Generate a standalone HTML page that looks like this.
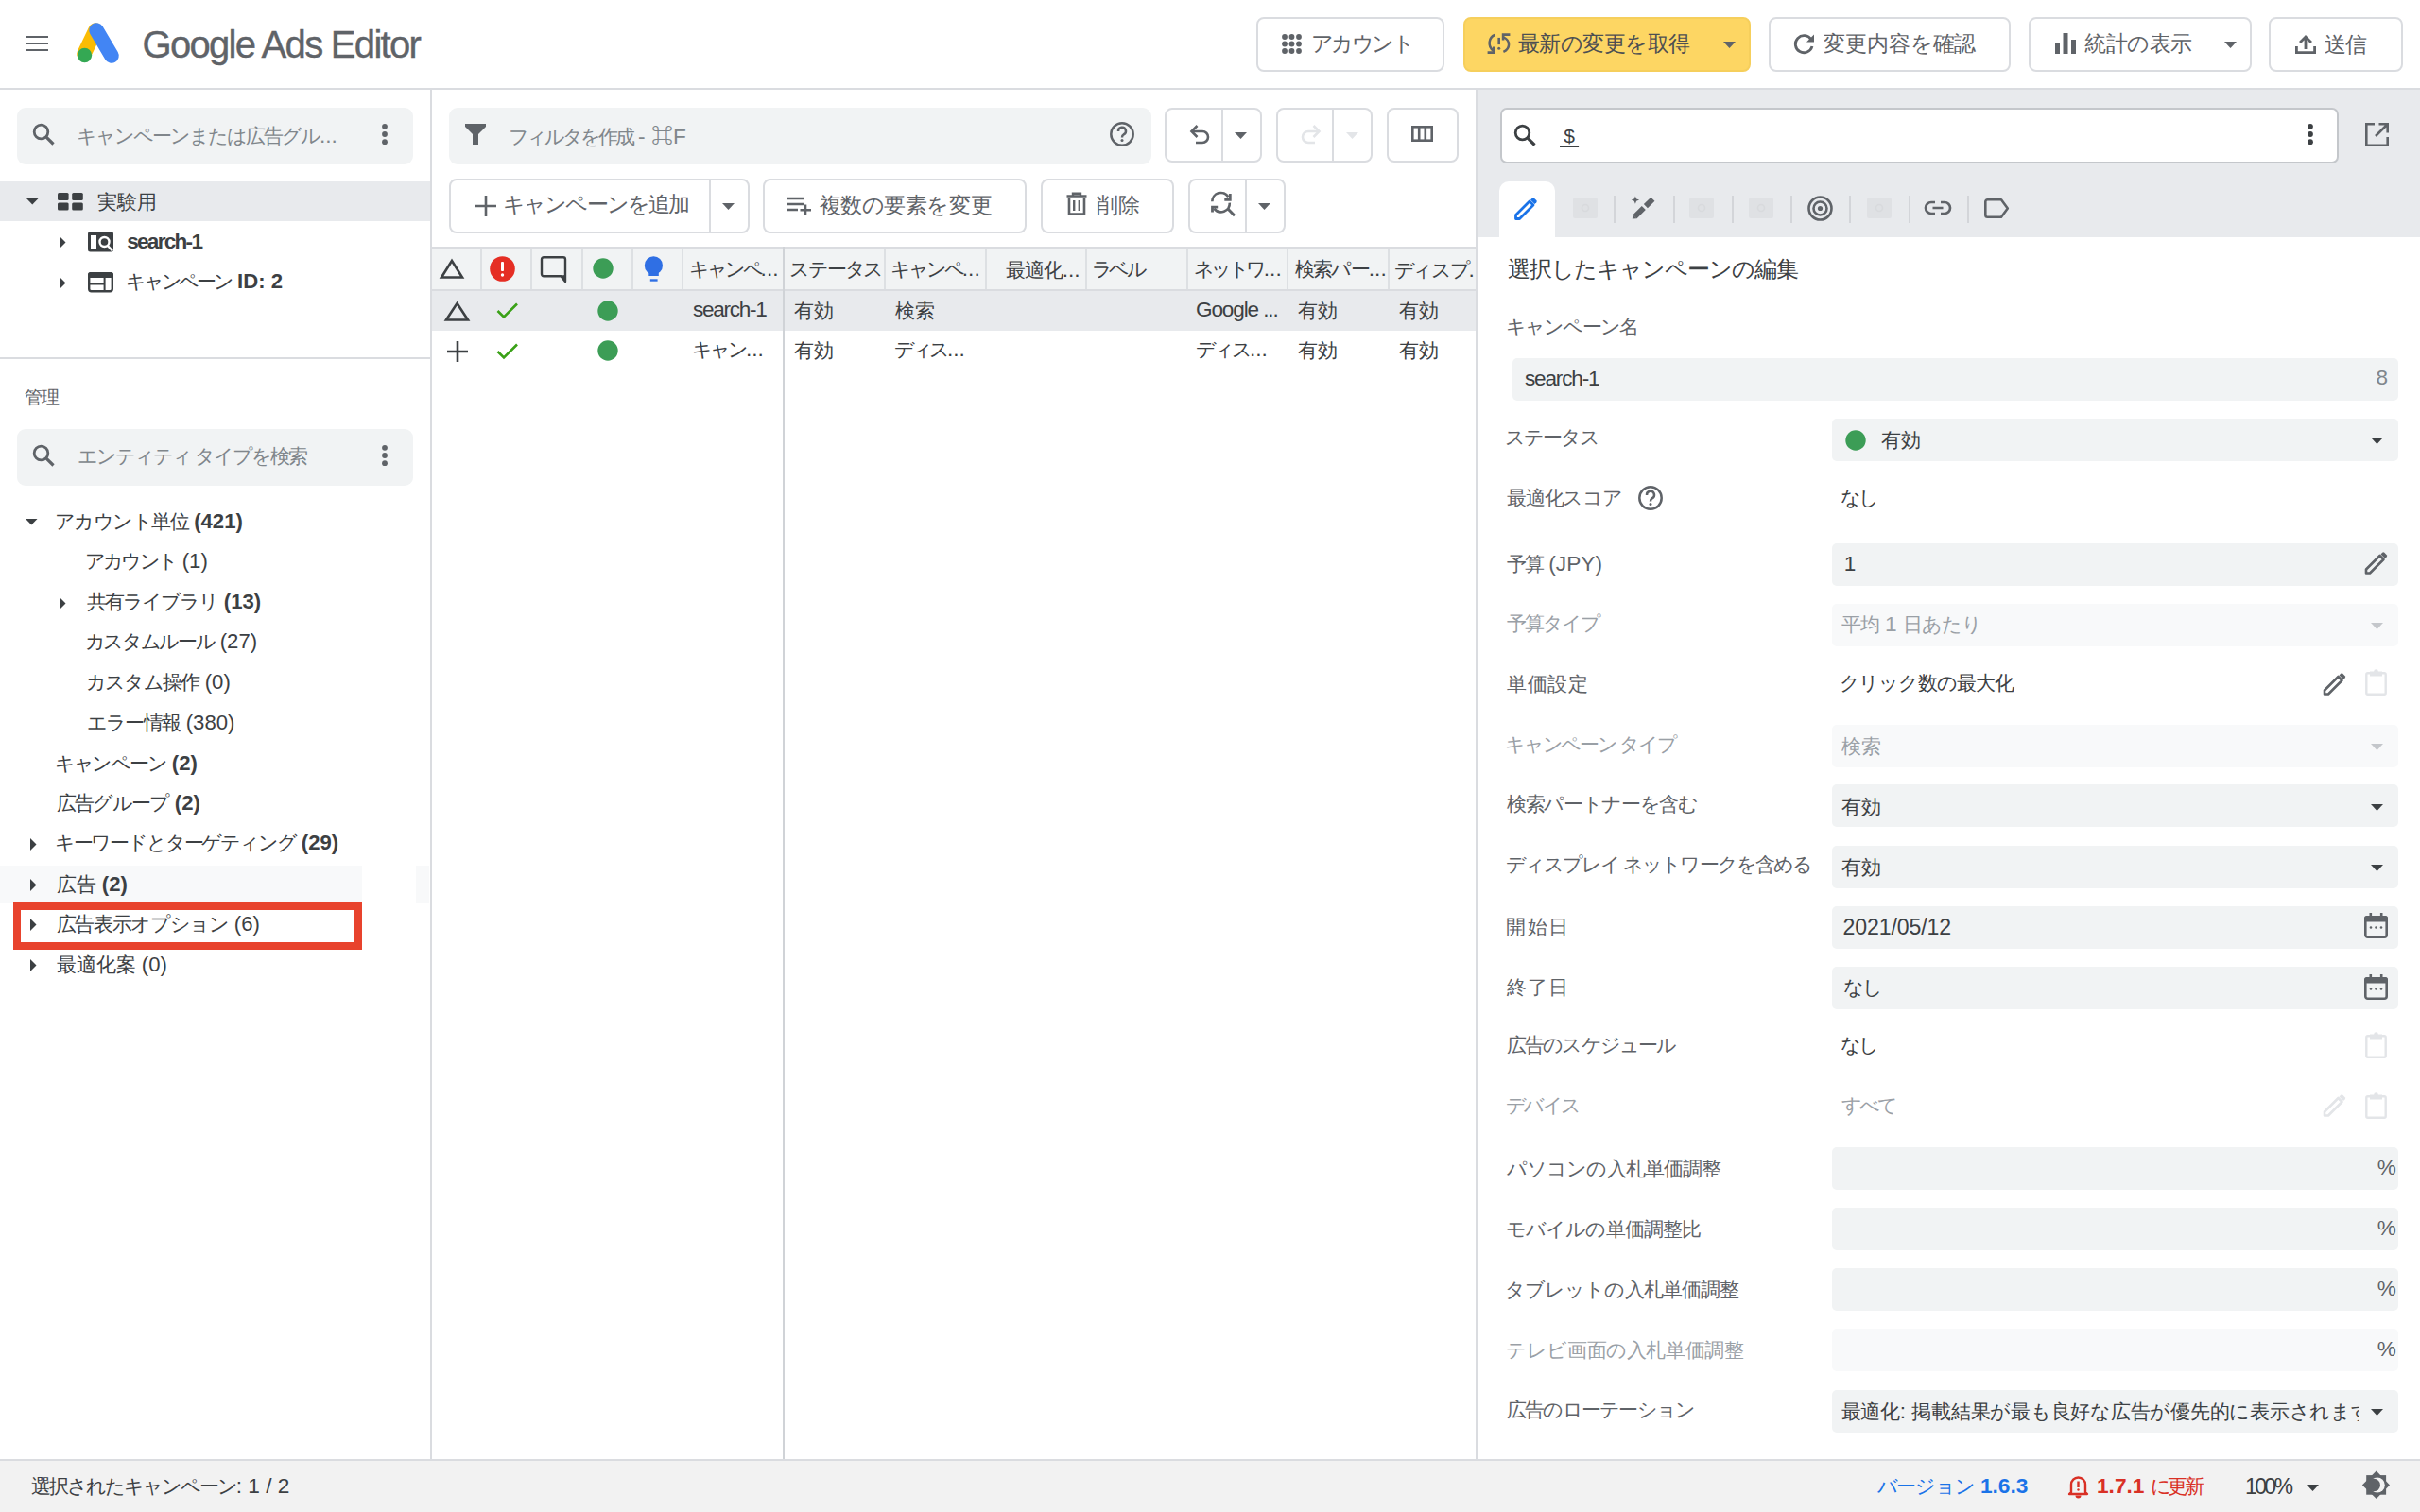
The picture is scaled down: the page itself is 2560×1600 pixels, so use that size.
<!DOCTYPE html>
<html lang="ja"><head><meta charset="utf-8"><title>Google Ads Editor</title>
<style>
*{box-sizing:border-box;margin:0;padding:0}
html,body{width:2560px;height:1600px;overflow:hidden;background:#fff}
body{font-family:"Liberation Sans",sans-serif;color:#3c4043;position:relative}
.a{position:absolute}
.t{position:absolute;white-space:nowrap;line-height:1}
.btn{position:absolute;border:2px solid #dadce0;border-radius:7px;background:#fff}
.vdiv{position:absolute;width:2px;background:#dadce0}
.box{position:absolute;background:#f1f3f4;border-radius:9px}
svg{position:absolute;overflow:visible}
</style></head>
<body>
<div class="a" style="left:0;top:93px;width:2560px;height:2px;background:#dadce0"></div>
<div class="a" style="left:27px;top:38px;width:24px;height:2.4px;background:#5f6368"></div>
<div class="a" style="left:27px;top:45px;width:24px;height:2.4px;background:#5f6368"></div>
<div class="a" style="left:27px;top:52px;width:24px;height:2.4px;background:#5f6368"></div>
<svg style="left:80px;top:22px" width="50" height="46" viewBox="0 0 50 46">
<line x1="21" y1="10" x2="9" y2="35" stroke="#fbbc04" stroke-width="15.5" stroke-linecap="round"/>
<line x1="22" y1="10" x2="38" y2="37" stroke="#4285f4" stroke-width="15.5" stroke-linecap="round"/>
<circle cx="9.5" cy="36.5" r="7.7" fill="#34a853"/>
</svg>
<div class="t" id="t0e98bc9859" style="left:150.50px;top:27.0px;font-size:40px;height:40px;line-height:40px;letter-spacing:-1.687px;color:#5f6368;-webkit-text-stroke:0.4px #5f6368">Google Ads Editor</div>
<div class="a" style="left:1329px;top:18px;width:199px;height:58px;border:2px solid #dadce0;border-radius:8px;background:#fff"></div>
<svg style="left:1356px;top:36px" width="22" height="22"><circle cx="3.0" cy="3.0" r="2.9" fill="#5f6368"/><circle cx="3.0" cy="10.5" r="2.9" fill="#5f6368"/><circle cx="3.0" cy="18.0" r="2.9" fill="#5f6368"/><circle cx="10.5" cy="3.0" r="2.9" fill="#5f6368"/><circle cx="10.5" cy="10.5" r="2.9" fill="#5f6368"/><circle cx="10.5" cy="18.0" r="2.9" fill="#5f6368"/><circle cx="18.0" cy="3.0" r="2.9" fill="#5f6368"/><circle cx="18.0" cy="10.5" r="2.9" fill="#5f6368"/><circle cx="18.0" cy="18.0" r="2.9" fill="#5f6368"/></svg>
<div class="t" id="tbd3e4d66c5" style="left:1386.60px;top:34.5px;font-size:23px;height:23px;line-height:23px;letter-spacing:-2.500px;color:#5f6368">アカウント</div>
<div class="a" style="left:1548px;top:18px;width:304px;height:58px;border:2px solid #f6cf5c;border-radius:8px;background:#fdd663"></div>
<svg style="left:1572px;top:35px" width="28" height="24" viewBox="0 0 28 24">
<path d="M9.2 2 C3 4.5 1.2 13.5 7.8 18.8" fill="none" stroke="#5f6368" stroke-width="2.5"/>
<path d="M1.6 20.6 H8.3 V14.4" fill="none" stroke="#5f6368" stroke-width="2.6"/>
<rect x="12.4" y="4.9" width="2.6" height="7.2" fill="#5f6368"/><circle cx="13.7" cy="16.2" r="1.5" fill="#5f6368"/>
<path d="M18.8 4.5 C25.8 8 26 16.5 18.4 19.8" fill="none" stroke="#5f6368" stroke-width="2.5"/>
<path d="M18.1 7.6 V1.6 H25.4" fill="none" stroke="#5f6368" stroke-width="2.6"/>
</svg>
<div class="t" id="t5f19e19717" style="left:1606.00px;top:35.2px;font-size:23px;height:23px;line-height:23px;letter-spacing:-0.571px;color:#4d4f52">最新の変更を取得</div>
<svg style="left:1822.5px;top:43.5px" width="13" height="7"><path d="M0 0H13L6.5 7Z" fill="#5f6368"/></svg>
<div class="a" style="left:1871px;top:18px;width:256px;height:58px;border:2px solid #dadce0;border-radius:8px;background:#fff"></div>
<svg style="left:1897px;top:35px" width="24" height="23" viewBox="0 0 24 23">
<path d="M19 7 A9 9 0 1 0 20 14" fill="none" stroke="#5f6368" stroke-width="2.8"/>
<path d="M14 9.5 L22 9.5 L22 1.5Z" fill="#5f6368"/>
</svg>
<div class="t" id="tc52f889c36" style="left:1929.40px;top:35.4px;font-size:23px;height:23px;line-height:23px;letter-spacing:-0.167px;color:#5f6368">変更内容を確認</div>
<div class="a" style="left:2146px;top:18px;width:236px;height:58px;border:2px solid #dadce0;border-radius:8px;background:#fff"></div>
<svg style="left:2174px;top:35px" width="22" height="22"><rect x="0" y="10" width="5" height="12" fill="#5f6368"/><rect x="8.5" y="0" width="5" height="22" fill="#5f6368"/><rect x="17" y="7" width="5" height="15" fill="#5f6368"/></svg>
<div class="t" id="tb15a55fc0b" style="left:2205.00px;top:35.3px;font-size:23px;height:23px;line-height:23px;letter-spacing:-0.500px;color:#5f6368">統計の表示</div>
<svg style="left:2352.5px;top:43.5px" width="13" height="7"><path d="M0 0H13L6.5 7Z" fill="#5f6368"/></svg>
<div class="a" style="left:2400px;top:18px;width:142px;height:58px;border:2px solid #dadce0;border-radius:8px;background:#fff"></div>
<svg style="left:2428px;top:36px" width="22" height="21" viewBox="0 0 22 21">
<path d="M11 16 V3 M5 9 L11 3 L17 9" fill="none" stroke="#5f6368" stroke-width="2.8"/>
<path d="M1.4 13 V19.6 H20.6 V13" fill="none" stroke="#5f6368" stroke-width="2.8"/>
</svg>
<div class="t" id="t28615207a4" style="left:2459.40px;top:35.5px;font-size:23px;height:23px;line-height:23px;letter-spacing:-1.000px;color:#5f6368">送信</div>
<div class="a" style="left:18px;top:114px;width:419px;height:60px;background:#f1f3f4;border-radius:9px"></div>
<svg style="left:34px;top:130px" width="24.0" height="24.0" viewBox="0 0 24 24">
<circle cx="9.5" cy="9.5" r="7.3" fill="none" stroke="#5f6368" stroke-width="2.8"/>
<path d="M14.8 14.8 L22.5 22.5" stroke="#5f6368" stroke-width="3.1999999999999997"/>
</svg>
<div class="t" id="t1f94e6896a" style="left:81.00px;top:132.7px;font-size:21px;height:21px;line-height:21px;letter-spacing:-2.000px;color:#80868b">キャンペーンまたは広告グル<span style="letter-spacing:0;font-size:1.08em">...</span></div>
<svg style="left:403px;top:130px" width="8" height="24"><circle cx="4" cy="3.8000000000000007" r="2.9" fill="#5f6368"/><circle cx="4" cy="12.0" r="2.9" fill="#5f6368"/><circle cx="4" cy="20.2" r="2.9" fill="#5f6368"/></svg>
<div class="a" style="left:0px;top:192px;width:455px;height:42px;background:#e8eaed"></div>
<svg style="left:27.75px;top:210.25px" width="12.5" height="6.5"><path d="M0 0H12.5L6.25 6.5Z" fill="#3c4043"/></svg>
<svg style="left:61px;top:204px" width="27" height="19"><rect x="0" y="0" width="11.6" height="8" rx="1.5" fill="#3c4043"/><rect x="0" y="10.4" width="11.6" height="8" rx="1.5" fill="#3c4043"/><rect x="15.2" y="0" width="11.6" height="8" rx="1.5" fill="#3c4043"/><rect x="15.2" y="10.4" width="11.6" height="8" rx="1.5" fill="#3c4043"/></svg>
<div class="t" id="t51777ecbb5" style="left:103.00px;top:202.5px;font-size:21px;height:21px;line-height:21px;color:#3c4043">実験用</div>
<svg style="left:62.95px;top:249.5px" width="6.5" height="13"><path d="M0 0V13L6.5 6.5Z" fill="#3c4043"/></svg>
<svg style="left:93px;top:245px" width="27" height="22" viewBox="0 0 27 22">
<rect x="0" y="0" width="27" height="21.5" rx="2.5" fill="#3c4043"/>
<rect x="3" y="4" width="6" height="14.5" fill="#fff"/>
<circle cx="17.5" cy="11" r="5" fill="none" stroke="#fff" stroke-width="2.4"/>
<circle cx="17.5" cy="11" r="2.6" fill="#3c4043"/>
<path d="M20.5 14.5 L26 20.5" stroke="#fff" stroke-width="2.4"/>
</svg>
<div class="t" id="td634d451cc" style="left:134.20px;top:244.7px;font-size:22.55px;height:22.55px;line-height:22.55px;letter-spacing:-1.714px;color:#3c4043;font-weight:bold">search-1</div>
<svg style="left:62.95px;top:292.5px" width="6.5" height="13"><path d="M0 0V13L6.5 6.5Z" fill="#3c4043"/></svg>
<svg style="left:93px;top:288px" width="27" height="22" viewBox="0 0 27 22">
<rect x="1.2" y="1.2" width="24.6" height="19" rx="2.5" fill="none" stroke="#3c4043" stroke-width="2.4"/>
<rect x="0" y="0" width="27" height="6" rx="2.5" fill="#3c4043"/>
<path d="M2 12.6 H17 M17.6 6 V20" stroke="#3c4043" stroke-width="2"/>
</svg>
<div class="t" id="t5456d05e07" style="left:132.90px;top:287.8px;font-size:20.5px;height:20.5px;line-height:20.5px;letter-spacing:-3.167px;color:#3c4043">キャンペーン<span style="letter-spacing:0;font-size:1.08em"> </span><b><span style="letter-spacing:0;font-size:1.08em">ID: 2</span></b></div>
<div class="a" style="left:0px;top:378px;width:455px;height:2px;background:#dadce0"></div>
<div class="t" id="tce64fb257d" style="left:25.70px;top:410.5px;font-size:19px;height:19px;line-height:19px;letter-spacing:-1.000px;color:#5f6368">管理</div>
<div class="a" style="left:18px;top:454px;width:419px;height:60px;background:#f1f3f4;border-radius:9px"></div>
<svg style="left:34px;top:470px" width="24.0" height="24.0" viewBox="0 0 24 24">
<circle cx="9.5" cy="9.5" r="7.3" fill="none" stroke="#5f6368" stroke-width="2.8"/>
<path d="M14.8 14.8 L22.5 22.5" stroke="#5f6368" stroke-width="3.1999999999999997"/>
</svg>
<div class="t" id="t41e2b36975" style="left:82.00px;top:471.7px;font-size:21px;height:21px;line-height:21px;letter-spacing:-2.000px;color:#80868b">エンティティ タイプを検索</div>
<svg style="left:403px;top:470px" width="8" height="24"><circle cx="4" cy="3.8000000000000007" r="2.9" fill="#5f6368"/><circle cx="4" cy="12.0" r="2.9" fill="#5f6368"/><circle cx="4" cy="20.2" r="2.9" fill="#5f6368"/></svg>
<div class="a" style="left:0px;top:916px;width:383px;height:40px;background:#f8f9fa"></div>
<div class="a" style="left:440px;top:916px;width:14px;height:40px;background:#f8f9fa"></div>
<svg style="left:27.25px;top:549.45px" width="12.5" height="6.5"><path d="M0 0H12.5L6.25 6.5Z" fill="#3c4043"/></svg>
<div class="t" id="t031c90fa45" style="left:58.00px;top:541.7px;font-size:20.5px;height:20.5px;line-height:20.5px;letter-spacing:-1.571px;color:#3c4043">アカウント単位<span style="letter-spacing:0;font-size:1.08em"> </span><b><span style="letter-spacing:0;font-size:1.08em">(421)</span></b></div>
<div class="t" id="t4351a4cfc5" style="left:89.60px;top:584.0px;font-size:20.5px;height:20.5px;line-height:20.5px;letter-spacing:-2.600px;color:#3c4043">アカウント<span style="letter-spacing:0;font-size:1.08em"> (1)</span></div>
<svg style="left:63.25px;top:631.5px" width="6.5" height="13"><path d="M0 0V13L6.5 6.5Z" fill="#3c4043"/></svg>
<div class="t" id="t6fb28b62c7" style="left:91.60px;top:627.0px;font-size:20.5px;height:20.5px;line-height:20.5px;letter-spacing:-1.857px;color:#3c4043">共有ライブラリ<span style="letter-spacing:0;font-size:1.08em"> </span><b><span style="letter-spacing:0;font-size:1.08em">(13)</span></b></div>
<div class="t" id="t906edec8b3" style="left:89.60px;top:669.2px;font-size:20.5px;height:20.5px;line-height:20.5px;letter-spacing:-2.286px;color:#3c4043">カスタムルール<span style="letter-spacing:0;font-size:1.08em"> (27)</span></div>
<div class="t" id="te8d5837495" style="left:90.60px;top:711.7px;font-size:20.5px;height:20.5px;line-height:20.5px;letter-spacing:-1.667px;color:#3c4043">カスタム操作<span style="letter-spacing:0;font-size:1.08em"> (0)</span></div>
<div class="t" id="t5d91410f7c" style="left:91.60px;top:754.6px;font-size:20.5px;height:20.5px;line-height:20.5px;letter-spacing:-1.600px;color:#3c4043">エラー情報<span style="letter-spacing:0;font-size:1.08em"> (380)</span></div>
<div class="t" id="tdfaea9c2f2" style="left:57.70px;top:797.8px;font-size:20.5px;height:20.5px;line-height:20.5px;letter-spacing:-2.167px;color:#3c4043">キャンペーン<span style="letter-spacing:0;font-size:1.08em"> </span><b><span style="letter-spacing:0;font-size:1.08em">(2)</span></b></div>
<div class="t" id="t6c25c6415c" style="left:59.70px;top:839.6px;font-size:20.5px;height:20.5px;line-height:20.5px;letter-spacing:-1.667px;color:#3c4043">広告グループ<span style="letter-spacing:0;font-size:1.08em"> </span><b><span style="letter-spacing:0;font-size:1.08em">(2)</span></b></div>
<svg style="left:31.75px;top:887.0px" width="6.5" height="13"><path d="M0 0V13L6.5 6.5Z" fill="#3c4043"/></svg>
<div class="t" id="te58e9979fa" style="left:57.70px;top:882.2px;font-size:20.5px;height:20.5px;line-height:20.5px;letter-spacing:-2.154px;color:#3c4043">キーワードとターゲティング<span style="letter-spacing:0;font-size:1.08em"> </span><b><span style="letter-spacing:0;font-size:1.08em">(29)</span></b></div>
<svg style="left:31.75px;top:929.5px" width="6.5" height="13"><path d="M0 0V13L6.5 6.5Z" fill="#3c4043"/></svg>
<div class="t" id="t1c98eda746" style="left:59.70px;top:925.8px;font-size:20.5px;height:20.5px;line-height:20.5px;letter-spacing:0.000px;color:#3c4043">広告<span style="letter-spacing:0;font-size:1.08em"> </span><b><span style="letter-spacing:0;font-size:1.08em">(2)</span></b></div>
<svg style="left:31.75px;top:972.0px" width="6.5" height="13"><path d="M0 0V13L6.5 6.5Z" fill="#3c4043"/></svg>
<div class="t" id="t74a955de19" style="left:59.70px;top:967.7px;font-size:20.5px;height:20.5px;line-height:20.5px;letter-spacing:-1.333px;color:#3c4043">広告表示オプション<span style="letter-spacing:0;font-size:1.08em"> (6)</span></div>
<svg style="left:31.75px;top:1014.5px" width="6.5" height="13"><path d="M0 0V13L6.5 6.5Z" fill="#3c4043"/></svg>
<div class="t" id="tb235673638" style="left:59.70px;top:1010.8px;font-size:20.5px;height:20.5px;line-height:20.5px;letter-spacing:-0.000px;color:#3c4043">最適化案<span style="letter-spacing:0;font-size:1.08em"> (0)</span></div>
<div class="a" style="left:14px;top:955px;width:369px;height:50px;border:8px solid #e8432d"></div>
<div class="a" style="left:455px;top:95px;width:2px;height:1450px;background:#dadce0"></div>
<div class="a" style="left:475px;top:114px;width:743px;height:60px;background:#f1f3f4;border-radius:9px"></div>
<svg style="left:492px;top:131px" width="22" height="22" viewBox="0 0 22 22"><path d="M0 0 H22 V3 L14 11 V22 H8 V11 L0 3Z" fill="#5f6368"/></svg>
<div class="t" id="t86e97a2b0c" style="left:537.80px;top:133.8px;font-size:21px;height:21px;line-height:21px;letter-spacing:-3.000px;color:#80868b">フィルタを作成<span style="letter-spacing:0;font-size:1.08em"> - ⌘F</span></div>
<svg style="left:1174px;top:129px" width="26" height="26" viewBox="0 0 26 26">
<circle cx="13" cy="13" r="11.7" fill="none" stroke="#5f6368" stroke-width="2.5"/>
<path d="M9 10 A4 4 0 1 1 14.5 13.5 C13 14.3 13 15 13 16.5" fill="none" stroke="#5f6368" stroke-width="2.5"/>
<circle cx="13" cy="19.5" r="1.5" fill="#5f6368"/>
</svg>
<div class="a" style="left:1232px;top:114px;width:103px;height:58px;border:2px solid #dadce0;border-radius:8px;background:#fff"></div>
<div class="a" style="left:1292px;top:115px;width:2px;height:56px;background:#dadce0"></div>
<svg style="left:1258px;top:131px" width="23" height="21" viewBox="0 0 23 21">
<path d="M3 8 H14 A6 6 0 0 1 14 20 H7" fill="none" stroke="#5f6368" stroke-width="2.6"/>
<path d="M8.5 2 L2.5 8 L8.5 14" fill="none" stroke="#5f6368" stroke-width="2.6"/>
</svg>
<svg style="left:1305.5px;top:139.5px" width="13" height="7"><path d="M0 0H13L6.5 7Z" fill="#5f6368"/></svg>
<div class="a" style="left:1350px;top:114px;width:102px;height:58px;border:2px solid #dadce0;border-radius:8px;background:#fff"></div>
<div class="a" style="left:1409px;top:115px;width:2px;height:56px;background:#dadce0"></div>
<svg style="left:1375px;top:131px" width="23" height="21" viewBox="0 0 23 21">
<path d="M20 8 H9 A6 6 0 0 0 9 20 H16" fill="none" stroke="#e3e5e8" stroke-width="2.6"/>
<path d="M14.5 2 L20.5 8 L14.5 14" fill="none" stroke="#e3e5e8" stroke-width="2.6"/>
</svg>
<svg style="left:1423.5px;top:139.5px" width="13" height="7"><path d="M0 0H13L6.5 7Z" fill="#e3e5e8"/></svg>
<div class="a" style="left:1467px;top:114px;width:76px;height:58px;border:2px solid #dadce0;border-radius:8px;background:#fff"></div>
<svg style="left:1493px;top:133px" width="23" height="17"><rect x="1.3" y="1.3" width="20.4" height="14.4" fill="none" stroke="#5f6368" stroke-width="2.6"/><path d="M8.2 1 V16 M14.8 1 V16" stroke="#5f6368" stroke-width="2.6"/></svg>
<div class="a" style="left:475px;top:189px;width:318px;height:58px;border:2px solid #dadce0;border-radius:8px;background:#fff"></div>
<div class="a" style="left:750px;top:190px;width:2px;height:56px;background:#dadce0"></div>
<svg style="left:503px;top:207px" width="22" height="22"><path d="M11 0 V22 M0 11 H22" stroke="#5f6368" stroke-width="2.6"/></svg>
<div class="t" id="t782b6a32c0" style="left:532.00px;top:206.0px;font-size:22.5px;height:22.5px;line-height:22.5px;letter-spacing:-1.875px;color:#5f6368">キャンペーンを追加</div>
<svg style="left:763.5px;top:214.5px" width="13" height="7"><path d="M0 0H13L6.5 7Z" fill="#5f6368"/></svg>
<div class="a" style="left:807px;top:189px;width:279px;height:58px;border:2px solid #dadce0;border-radius:8px;background:#fff"></div>
<svg style="left:833px;top:208px" width="27" height="20" viewBox="0 0 27 20">
<path d="M0 2 H17 M0 8 H17 M0 14 H11" stroke="#5f6368" stroke-width="2.6"/>
<path d="M19 8.5 V20 M13.5 14.2 H25" stroke="#5f6368" stroke-width="2.6"/>
</svg>
<div class="t" id="t975316687c" style="left:866.60px;top:206.5px;font-size:22.5px;height:22.5px;line-height:22.5px;letter-spacing:-0.429px;color:#5f6368">複数の要素を変更</div>
<div class="a" style="left:1101px;top:189px;width:141px;height:58px;border:2px solid #dadce0;border-radius:8px;background:#fff"></div>
<svg style="left:1128px;top:204px" width="22" height="24" viewBox="0 0 22 24">
<path d="M0.5 3.5 H21.5 M7 3.5 V0.8 H15 V3.5" fill="none" stroke="#5f6368" stroke-width="2.4"/>
<path d="M3 5 V22.5 H19 V5" fill="none" stroke="#5f6368" stroke-width="2.6"/>
<path d="M8.2 8 V19 M13.8 8 V19" stroke="#5f6368" stroke-width="2.4"/>
</svg>
<div class="t" id="t85a9fe6288" style="left:1160.00px;top:206.8px;font-size:22.5px;height:22.5px;line-height:22.5px;color:#5f6368">削除</div>
<div class="a" style="left:1257px;top:189px;width:103px;height:58px;border:2px solid #dadce0;border-radius:8px;background:#fff"></div>
<div class="a" style="left:1317px;top:190px;width:2px;height:56px;background:#dadce0"></div>
<svg style="left:1280px;top:202px" width="28" height="28" viewBox="0 0 28 28">
<path d="M2.3 11.3 A9.2 9.2 0 0 1 19.3 6.3" fill="none" stroke="#5f6368" stroke-width="2.6"/>
<path d="M15.3 9.3 H21.3 V3" fill="none" stroke="#5f6368" stroke-width="2.8"/>
<path d="M20.8 12.6 A9.2 9.2 0 0 1 4.3 18.6" fill="none" stroke="#5f6368" stroke-width="2.6"/>
<path d="M8.2 17.2 H2.5 V22.6" fill="none" stroke="#5f6368" stroke-width="2.8"/>
<path d="M18.5 18.5 L26 26.2" stroke="#5f6368" stroke-width="3"/>
</svg>
<svg style="left:1330.5px;top:214.5px" width="13" height="7"><path d="M0 0H13L6.5 7Z" fill="#5f6368"/></svg>
<div class="a" style="left:457px;top:261px;width:1105px;height:47px;background:#f1f3f4;border-top:2px solid #dadce0;border-bottom:2px solid #dadce0"></div>
<div class="a" style="left:508px;top:263px;width:2px;height:43px;background:#dde0e3"></div>
<div class="a" style="left:561px;top:263px;width:2px;height:43px;background:#dde0e3"></div>
<div class="a" style="left:615px;top:263px;width:2px;height:43px;background:#dde0e3"></div>
<div class="a" style="left:668px;top:263px;width:2px;height:43px;background:#dde0e3"></div>
<div class="a" style="left:721px;top:263px;width:2px;height:43px;background:#dde0e3"></div>
<div class="a" style="left:935px;top:263px;width:2px;height:43px;background:#dde0e3"></div>
<div class="a" style="left:1042px;top:263px;width:2px;height:43px;background:#dde0e3"></div>
<div class="a" style="left:1148px;top:263px;width:2px;height:43px;background:#dde0e3"></div>
<div class="a" style="left:1255px;top:263px;width:2px;height:43px;background:#dde0e3"></div>
<div class="a" style="left:1361px;top:263px;width:2px;height:43px;background:#dde0e3"></div>
<div class="a" style="left:1468px;top:263px;width:2px;height:43px;background:#dde0e3"></div>
<div class="a" style="left:828px;top:261px;width:2px;height:1284px;background:#d0d3d7"></div>
<svg style="left:465px;top:274px" width="26" height="21" viewBox="0 0 26 21"><path d="M13 2 L24 19.5 H2Z" fill="none" stroke="#3c4043" stroke-width="2.6" stroke-linejoin="miter"/></svg>
<svg style="left:518px;top:271px" width="27" height="27" viewBox="0 0 27 27"><circle cx="13.5" cy="13.5" r="13.3" fill="#e52e24"/><rect x="12" y="6" width="3" height="10" rx="1" fill="#fff"/><circle cx="13.5" cy="20" r="1.7" fill="#fff"/></svg>
<svg style="left:571px;top:270px" width="29" height="29" viewBox="0 0 29 29"><path d="M4.2 2.2 H24.8 A2.2 2.2 0 0 1 27 4.4 V28 L22.5 22.2 H4.2 A2.2 2.2 0 0 1 2 20 V4.4 A2.2 2.2 0 0 1 4.2 2.2Z" fill="none" stroke="#3c4043" stroke-width="2.4" stroke-linejoin="round"/><path d="M22 21.5 L27 27.5 V21Z" fill="#3c4043"/></svg>
<svg style="left:627px;top:273px" width="22" height="22"><circle cx="11" cy="11" r="10.7" fill="#3c9d56"/></svg>
<svg style="left:681px;top:270px" width="21" height="29" viewBox="0 0 21 29"><circle cx="10.4" cy="10.9" r="9.6" fill="#2f6fe4"/><rect x="5.3" y="14" width="10.5" height="8" fill="#2f6fe4"/><rect x="6.8" y="25.3" width="7.8" height="2.4" fill="#2f6fe4"/></svg>
<div class="t" id="t49a91fd990" style="left:728.60px;top:273.5px;font-size:21px;height:21px;line-height:21px;letter-spacing:-3.000px;color:#3c4043">キャンペ<span style="letter-spacing:0;font-size:1.08em">...</span></div>
<div class="t" id="tcb27e32c73" style="left:835.30px;top:273.5px;font-size:21px;height:21px;line-height:21px;letter-spacing:-2.250px;color:#3c4043">ステータス</div>
<div class="t" id="t2fb14317ef" style="left:941.80px;top:273.5px;font-size:21px;height:21px;line-height:21px;letter-spacing:-3.000px;color:#3c4043">キャンペ<span style="letter-spacing:0;font-size:1.08em">...</span></div>
<div class="t" id="t5574c52f5c" style="left:1063.70px;top:274.5px;font-size:21px;height:21px;line-height:21px;letter-spacing:-1.000px;color:#3c4043">最適化<span style="letter-spacing:0;font-size:1.08em">...</span></div>
<div class="t" id="tf387f87156" style="left:1154.60px;top:273.5px;font-size:21px;height:21px;line-height:21px;letter-spacing:-3.500px;color:#3c4043">ラベル</div>
<div class="t" id="t9575097b27" style="left:1262.80px;top:273.5px;font-size:21px;height:21px;line-height:21px;letter-spacing:-3.500px;color:#3c4043">ネットワ<span style="letter-spacing:0;font-size:1.08em">...</span></div>
<div class="t" id="t5d4e98ecd6" style="left:1369.80px;top:274.0px;font-size:21px;height:21px;line-height:21px;letter-spacing:-1.750px;color:#3c4043">検索パー<span style="letter-spacing:0;font-size:1.08em">...</span></div>
<div class="t" id="tf0c1e1586e" style="left:1474.70px;top:273.5px;font-size:21px;height:21px;line-height:21px;color:#3c4043;width:85.3px;overflow:hidden;height:26px;top:272px;line-height:26px;letter-spacing:-2.3px">ディスプ<span style="letter-spacing:0;font-size:1.08em">...</span></div>
<div class="a" style="left:457px;top:308px;width:1105px;height:42px;background:#e8eaed"></div>
<div class="a" style="left:828px;top:308px;width:2px;height:42px;background:#d0d3d7"></div>
<svg style="left:470px;top:319px" width="27" height="21" viewBox="0 0 27 21"><path d="M13.5 2 L25 19.5 H2Z" fill="none" stroke="#3c4043" stroke-width="2.6"/></svg>
<svg style="left:525px;top:320px" width="24" height="18" viewBox="0 0 24 18"><path d="M1.5 9 L8 15.5 L22 1.5" fill="none" stroke="#3aa117" stroke-width="2.6"/></svg>
<svg style="left:632px;top:318px" width="22" height="22"><circle cx="11" cy="11" r="10.7" fill="#3c9d56"/></svg>
<div class="t" id="tcdf4fcc91b" style="left:733.00px;top:317.0px;font-size:22.55px;height:22.55px;line-height:22.55px;letter-spacing:-1.286px;color:#3c4043">search-1</div>
<div class="t" id="t5e9e72ff10" style="left:840.00px;top:317.8px;font-size:21px;height:21px;line-height:21px;letter-spacing:-0.000px;color:#3c4043">有効</div>
<div class="t" id="tae988b3c7a" style="left:946.60px;top:317.8px;font-size:21px;height:21px;line-height:21px;letter-spacing:-0.000px;color:#3c4043">検索</div>
<div class="t" id="t979ff9a0c1" style="left:1265.00px;top:317.0px;font-size:22.55px;height:22.55px;line-height:22.55px;letter-spacing:-1.111px;color:#3c4043">Google ...</div>
<div class="t" id="td279f1e1f7" style="left:1373.30px;top:317.8px;font-size:21px;height:21px;line-height:21px;letter-spacing:0.000px;color:#3c4043">有効</div>
<div class="t" id="te933284f8f" style="left:1479.70px;top:317.8px;font-size:21px;height:21px;line-height:21px;letter-spacing:-0.000px;color:#3c4043">有効</div>
<svg style="left:473px;top:361px" width="22" height="22"><path d="M11 0 V22 M0 11 H22" stroke="#3c4043" stroke-width="2.6"/></svg>
<svg style="left:525px;top:363px" width="24" height="18" viewBox="0 0 24 18"><path d="M1.5 9 L8 15.5 L22 1.5" fill="none" stroke="#3aa117" stroke-width="2.6"/></svg>
<svg style="left:632px;top:360px" width="22" height="22"><circle cx="11" cy="11" r="10.7" fill="#3c9d56"/></svg>
<div class="t" id="ta8fd1af36f" style="left:732.00px;top:359.3px;font-size:21px;height:21px;line-height:21px;letter-spacing:-3.000px;color:#3c4043">キャン<span style="letter-spacing:0;font-size:1.08em">...</span></div>
<div class="t" id="t140d16e669" style="left:840.00px;top:360.3px;font-size:21px;height:21px;line-height:21px;letter-spacing:-0.000px;color:#3c4043">有効</div>
<div class="t" id="td59a90cf35" style="left:946.00px;top:359.3px;font-size:21px;height:21px;line-height:21px;letter-spacing:-3.333px;color:#3c4043">ディス<span style="letter-spacing:0;font-size:1.08em">...</span></div>
<div class="t" id="tb14278cd50" style="left:1265.00px;top:359.3px;font-size:21px;height:21px;line-height:21px;letter-spacing:-3.000px;color:#3c4043">ディス<span style="letter-spacing:0;font-size:1.08em">...</span></div>
<div class="t" id="t1ba453fd7a" style="left:1373.30px;top:360.3px;font-size:21px;height:21px;line-height:21px;letter-spacing:0.000px;color:#3c4043">有効</div>
<div class="t" id="t8461eaf800" style="left:1479.70px;top:360.3px;font-size:21px;height:21px;line-height:21px;letter-spacing:-0.000px;color:#3c4043">有効</div>
<div class="a" style="left:1561px;top:95px;width:2px;height:1450px;background:#dadce0"></div>
<div class="a" style="left:1563px;top:95px;width:997px;height:156px;background:#e8eaed"></div>
<div class="a" style="left:1587px;top:114px;width:887px;height:59px;background:#fff;border:2px solid #c4c7cb;border-radius:7px"></div>
<svg style="left:1601px;top:131px" width="24.0" height="24.0" viewBox="0 0 24 24">
<circle cx="9.5" cy="9.5" r="7.3" fill="none" stroke="#3c4043" stroke-width="2.8"/>
<path d="M14.8 14.8 L22.5 22.5" stroke="#3c4043" stroke-width="3.1999999999999997"/>
</svg>
<div class="t" id="teea3679a62" style="left:1650.00px;top:132.5px;font-size:21px;height:21px;line-height:21px;color:#3c4043"><span style="text-decoration:underline;text-underline-offset:3px">&thinsp;$&thinsp;</span></div>
<svg style="left:2440px;top:130px" width="8" height="24"><circle cx="4" cy="3.8000000000000007" r="2.9" fill="#3c4043"/><circle cx="4" cy="12.0" r="2.9" fill="#3c4043"/><circle cx="4" cy="20.2" r="2.9" fill="#3c4043"/></svg>
<svg style="left:2502px;top:130px" width="25" height="25" viewBox="0 0 25 25">
<path d="M10 1.3 H1.3 V23.7 H23.7 V15" fill="none" stroke="#5f6368" stroke-width="2.6"/>
<path d="M14.5 1.3 H23.7 V10.5 M23.5 1.5 L11 14" fill="none" stroke="#5f6368" stroke-width="2.6"/>
</svg>
<div class="a" style="left:1586px;top:192px;width:59px;height:59px;background:#fff;border-radius:10px 10px 0 0"></div>
<svg style="left:1601px;top:208px" width="26" height="26" viewBox="0 0 26 26">
<path d="M2.5 19.5 L17 5 L21 9 L6.5 23.5 H2.5Z" fill="none" stroke="#1a73e8" stroke-width="2.8" stroke-linejoin="round"/>
<path d="M18 3.5 L19.8 1.7 A1.5 1.5 0 0 1 21.9 1.7 L24.3 4.1 A1.5 1.5 0 0 1 24.3 6.2 L22.5 8Z" fill="#1a73e8"/>
</svg>
<div class="a" style="left:1663.5px;top:209px;width:26.0px;height:22px;background:#dfe1e4;border-radius:2px"></div>
<svg style="left:1671.5px;top:214px" width="10" height="12"><circle cx="5" cy="6" r="3.5" fill="none" stroke="#d8dadd" stroke-width="1.6"/></svg>
<div class="a" style="left:1787px;top:209px;width:26px;height:22px;background:#dfe1e4;border-radius:2px"></div>
<svg style="left:1795px;top:214px" width="10" height="12"><circle cx="5" cy="6" r="3.5" fill="none" stroke="#d8dadd" stroke-width="1.6"/></svg>
<div class="a" style="left:1849.5px;top:209px;width:26.0px;height:22px;background:#dfe1e4;border-radius:2px"></div>
<svg style="left:1857.5px;top:214px" width="10" height="12"><circle cx="5" cy="6" r="3.5" fill="none" stroke="#d8dadd" stroke-width="1.6"/></svg>
<div class="a" style="left:1974.5px;top:209px;width:26.0px;height:22px;background:#dfe1e4;border-radius:2px"></div>
<svg style="left:1982.5px;top:214px" width="10" height="12"><circle cx="5" cy="6" r="3.5" fill="none" stroke="#d8dadd" stroke-width="1.6"/></svg>
<svg style="left:1722px;top:203px" width="32" height="32" viewBox="0 0 32 32">
<path d="M7.9 4.4 L9.1 7.4 L12.1 8.6 L9.1 9.8 L7.9 12.8 L6.7 9.8 L3.7 8.6 L6.7 7.4Z" fill="#5f6368"/>
<path d="M26.4 7.7 L18.9 15.1" stroke="#5f6368" stroke-width="5.8"/>
<path d="M16.8 17 L7.5 26.2" stroke="#5f6368" stroke-width="5.8"/>
<path d="M5.4 24 L4.8 28.6 L9.6 28.3Z" fill="#5f6368"/>
</svg>
<svg style="left:1912px;top:207px" width="27" height="27" viewBox="0 0 27 27">
<circle cx="13.5" cy="13.5" r="12" fill="none" stroke="#5f6368" stroke-width="2.6"/>
<circle cx="13.5" cy="13.5" r="7" fill="none" stroke="#5f6368" stroke-width="2.6"/>
<circle cx="13.5" cy="13.5" r="2.6" fill="#5f6368"/>
</svg>
<svg style="left:2036px;top:212px" width="28" height="16" viewBox="0 0 28 16">
<path d="M11 2 H7 A6 6 0 0 0 7 14 H11 M17 2 H21 A6 6 0 0 1 21 14 H17 M8.5 8 H19.5" fill="none" stroke="#5f6368" stroke-width="2.7"/>
</svg>
<svg style="left:2099px;top:210px" width="27" height="21" viewBox="0 0 27 21">
<path d="M3.5 1.3 H18 L24.8 10.5 L18 19.7 H3.5 A2.2 2.2 0 0 1 1.3 17.5 V3.5 A2.2 2.2 0 0 1 3.5 1.3Z" fill="none" stroke="#5f6368" stroke-width="2.6" stroke-linejoin="round"/>
</svg>
<div class="a" style="left:1707px;top:207px;width:2px;height:29px;background:#d3d5d9"></div>
<div class="a" style="left:1770px;top:207px;width:2px;height:29px;background:#d3d5d9"></div>
<div class="a" style="left:1832px;top:207px;width:2px;height:29px;background:#d3d5d9"></div>
<div class="a" style="left:1894px;top:207px;width:2px;height:29px;background:#d3d5d9"></div>
<div class="a" style="left:1956px;top:207px;width:2px;height:29px;background:#d3d5d9"></div>
<div class="a" style="left:2019px;top:207px;width:2px;height:29px;background:#d3d5d9"></div>
<div class="a" style="left:2081px;top:207px;width:2px;height:29px;background:#d3d5d9"></div>
<div class="t" id="t219e629094" style="left:1595.00px;top:273.3px;font-size:24px;height:24px;line-height:24px;letter-spacing:-1.000px;color:#3c4043">選択したキャンペーンの編集</div>
<div class="t" id="tb98aa506a7" style="left:1592.50px;top:334.6px;font-size:21px;height:21px;line-height:21px;letter-spacing:-1.667px;color:#5f6368">キャンペーン名</div>
<div class="a" style="left:1600px;top:379px;width:937px;height:45px;background:#f1f3f4;border-radius:5px"></div>
<div class="t" id="t3ad03faa90" style="left:1612.90px;top:389.7px;font-size:22.55px;height:22.55px;line-height:22.55px;letter-spacing:-1.143px;color:#3c4043">search-1</div>
<div class="t" id="t16eda00c2a" style="left:2513.50px;top:388.7px;font-size:22.55px;height:22.55px;line-height:22.55px;color:#80868b">8</div>
<div class="t" id="tc4f29c3feb" style="left:1592.00px;top:451.8px;font-size:21px;height:21px;line-height:21px;letter-spacing:-2.000px;color:#5f6368">ステータス</div>
<div class="a" style="left:1938px;top:443px;width:599px;height:45px;background:#f1f3f4;border-radius:5px"></div>
<svg style="left:1952px;top:455px" width="22" height="22"><circle cx="11" cy="11" r="10.7" fill="#3c9d56"/></svg>
<div class="t" id="t0d514c0ac6" style="left:1989.80px;top:454.5px;font-size:21px;height:21px;line-height:21px;letter-spacing:0.000px;color:#3c4043">有効</div>
<svg style="left:2507.5px;top:462.5px" width="13" height="7"><path d="M0 0H13L6.5 7Z" fill="#3c4043"/></svg>
<div class="t" id="t98caba115d" style="left:1594.00px;top:516.0px;font-size:21px;height:21px;line-height:21px;letter-spacing:-1.200px;color:#5f6368">最適化スコア</div>
<svg style="left:1733px;top:514px" width="26" height="26" viewBox="0 0 26 26">
<circle cx="13" cy="13" r="11.7" fill="none" stroke="#5f6368" stroke-width="2.5"/>
<path d="M9 10 A4 4 0 1 1 14.5 13.5 C13 14.3 13 15 13 16.5" fill="none" stroke="#5f6368" stroke-width="2.5"/>
<circle cx="13" cy="19.5" r="1.5" fill="#5f6368"/>
</svg>
<div class="t" id="t1a17b1de8c" style="left:1946.60px;top:515.5px;font-size:21px;height:21px;line-height:21px;letter-spacing:-3.000px;color:#3c4043">なし</div>
<div class="t" id="td46a958d6d" style="left:1594.00px;top:585.5px;font-size:21px;height:21px;line-height:21px;letter-spacing:-2.000px;color:#5f6368">予算<span style="letter-spacing:0;font-size:1.08em"> (JPY)</span></div>
<div class="a" style="left:1938px;top:575px;width:599px;height:45px;background:#f1f3f4;border-radius:5px"></div>
<div class="t" id="t1190a596de" style="left:1950.80px;top:585.7px;font-size:22.55px;height:22.55px;line-height:22.55px;color:#3c4043">1</div>
<svg style="left:2501px;top:584px" width="25" height="24" viewBox="0 0 25 24">
<path d="M2 18.5 L16.5 4 L20.5 8 L6 22.5 H2Z" fill="none" stroke="#5f6368" stroke-width="2.6" stroke-linejoin="round"/>
<path d="M17.5 2.5 L19.2 0.8 A1.5 1.5 0 0 1 21.3 0.8 L23.7 3.2 A1.5 1.5 0 0 1 23.7 5.3 L22 7Z" fill="#5f6368"/>
</svg>
<div class="t" id="t300b14db36" style="left:1594.00px;top:648.9px;font-size:21px;height:21px;line-height:21px;letter-spacing:-2.000px;color:#9aa0a6">予算タイプ</div>
<div class="a" style="left:1938px;top:638.6px;width:599px;height:45.0px;background:#f8f9fa;border-radius:5px"></div>
<div class="t" id="tc6abcf508d" style="left:1947.60px;top:650.0px;font-size:21px;height:21px;line-height:21px;letter-spacing:-1.000px;color:#9aa0a6">平均<span style="letter-spacing:0;font-size:1.08em"> 1 </span>日あたり</div>
<svg style="left:2507.5px;top:658.5px" width="13" height="7"><path d="M0 0H13L6.5 7Z" fill="#c4c7cb"/></svg>
<div class="t" id="t3891792fc8" style="left:1594.00px;top:712.5px;font-size:21px;height:21px;line-height:21px;letter-spacing:0.667px;color:#5f6368">単価設定</div>
<div class="t" id="te254f3e071" style="left:1945.60px;top:711.9px;font-size:21px;height:21px;line-height:21px;letter-spacing:-1.125px;color:#3c4043">クリック数の最大化</div>
<svg style="left:2457px;top:712px" width="25" height="24" viewBox="0 0 25 24">
<path d="M2 18.5 L16.5 4 L20.5 8 L6 22.5 H2Z" fill="none" stroke="#5f6368" stroke-width="2.6" stroke-linejoin="round"/>
<path d="M17.5 2.5 L19.2 0.8 A1.5 1.5 0 0 1 21.3 0.8 L23.7 3.2 A1.5 1.5 0 0 1 23.7 5.3 L22 7Z" fill="#5f6368"/>
</svg>
<svg style="left:2502px;top:708px" width="23" height="28" viewBox="0 0 23 28">
<rect x="1.3" y="4.3" width="20.4" height="22.4" rx="1.5" fill="none" stroke="#e3e5e8" stroke-width="2.4"/>
<rect x="5" y="2.5" width="13" height="5" fill="#e3e5e8"/><circle cx="11.5" cy="2.5" r="2.3" fill="#e3e5e8"/>
</svg>
<div class="t" id="t77e7be97a6" style="left:1592.00px;top:776.5px;font-size:21px;height:21px;line-height:21px;letter-spacing:-2.222px;color:#9aa0a6">キャンペーン タイプ</div>
<div class="a" style="left:1938px;top:766.7px;width:599px;height:45.0px;background:#f8f9fa;border-radius:5px"></div>
<div class="t" id="tf97bca44c7" style="left:1947.60px;top:778.5px;font-size:21px;height:21px;line-height:21px;color:#9aa0a6">検索</div>
<svg style="left:2507.5px;top:786.5px" width="13" height="7"><path d="M0 0H13L6.5 7Z" fill="#c4c7cb"/></svg>
<div class="t" id="t6f4078959d" style="left:1594.00px;top:839.8px;font-size:21px;height:21px;line-height:21px;letter-spacing:-1.333px;color:#5f6368">検索パートナーを含む</div>
<div class="a" style="left:1938px;top:830.4px;width:599px;height:45.0px;background:#f1f3f4;border-radius:5px"></div>
<div class="t" id="t8048dd532f" style="left:1947.60px;top:842.5px;font-size:21px;height:21px;line-height:21px;letter-spacing:0.000px;color:#3c4043">有効</div>
<svg style="left:2507.5px;top:850.5px" width="13" height="7"><path d="M0 0H13L6.5 7Z" fill="#3c4043"/></svg>
<div class="t" id="te51065a18d" style="left:1593.00px;top:903.6px;font-size:21px;height:21px;line-height:21px;letter-spacing:-1.938px;color:#5f6368">ディスプレイ ネットワークを含める</div>
<div class="a" style="left:1938px;top:894.5px;width:599px;height:45.0px;background:#f1f3f4;border-radius:5px"></div>
<div class="t" id="t4ca6f94f89" style="left:1947.60px;top:906.5px;font-size:21px;height:21px;line-height:21px;letter-spacing:0.000px;color:#3c4043">有効</div>
<svg style="left:2507.5px;top:914.5px" width="13" height="7"><path d="M0 0H13L6.5 7Z" fill="#3c4043"/></svg>
<div class="t" id="tbeeaa419c7" style="left:1593.00px;top:969.5px;font-size:21px;height:21px;line-height:21px;letter-spacing:1.500px;color:#5f6368">開始日</div>
<div class="a" style="left:1938px;top:958.5px;width:599px;height:45.0px;background:#f1f3f4;border-radius:5px"></div>
<div class="t" id="t45295d722c" style="left:1949.50px;top:969.5px;font-size:23.1px;height:23.1px;line-height:23.1px;letter-spacing:-0.111px;color:#3c4043">2021/05/12</div>
<svg style="left:2501px;top:966px" width="25" height="27" viewBox="0 0 25 27">
<rect x="1.3" y="4.3" width="22.4" height="21.4" rx="2.5" fill="none" stroke="#5f6368" stroke-width="2.6"/>
<rect x="0" y="3" width="25" height="6.5" rx="2.5" fill="#5f6368"/>
<rect x="5.5" y="0" width="2.6" height="4" fill="#5f6368"/><rect x="16.9" y="0" width="2.6" height="4" fill="#5f6368"/>
<circle cx="7" cy="15.5" r="1.3" fill="#5f6368"/><circle cx="12.5" cy="15.5" r="1.3" fill="#5f6368"/><circle cx="18" cy="15.5" r="1.3" fill="#5f6368"/>
</svg>
<div class="t" id="t80f55a7a61" style="left:1594.00px;top:1033.5px;font-size:21px;height:21px;line-height:21px;letter-spacing:1.000px;color:#5f6368">終了日</div>
<div class="a" style="left:1938px;top:1022.6px;width:599px;height:44.999999999999886px;background:#f1f3f4;border-radius:5px"></div>
<div class="t" id="tca82de412d" style="left:1949.50px;top:1033.5px;font-size:21px;height:21px;line-height:21px;letter-spacing:-2.000px;color:#3c4043">なし</div>
<svg style="left:2501px;top:1031px" width="25" height="27" viewBox="0 0 25 27">
<rect x="1.3" y="4.3" width="22.4" height="21.4" rx="2.5" fill="none" stroke="#5f6368" stroke-width="2.6"/>
<rect x="0" y="3" width="25" height="6.5" rx="2.5" fill="#5f6368"/>
<rect x="5.5" y="0" width="2.6" height="4" fill="#5f6368"/><rect x="16.9" y="0" width="2.6" height="4" fill="#5f6368"/>
<circle cx="7" cy="15.5" r="1.3" fill="#5f6368"/><circle cx="12.5" cy="15.5" r="1.3" fill="#5f6368"/><circle cx="18" cy="15.5" r="1.3" fill="#5f6368"/>
</svg>
<div class="t" id="t672ad6f699" style="left:1594.00px;top:1094.7px;font-size:21px;height:21px;line-height:21px;letter-spacing:-1.875px;color:#5f6368">広告のスケジュール</div>
<div class="t" id="t4079e4b63c" style="left:1946.60px;top:1094.5px;font-size:21px;height:21px;line-height:21px;letter-spacing:-3.000px;color:#3c4043">なし</div>
<svg style="left:2502px;top:1092px" width="23" height="28" viewBox="0 0 23 28">
<rect x="1.3" y="4.3" width="20.4" height="22.4" rx="1.5" fill="none" stroke="#e3e5e8" stroke-width="2.4"/>
<rect x="5" y="2.5" width="13" height="5" fill="#e3e5e8"/><circle cx="11.5" cy="2.5" r="2.3" fill="#e3e5e8"/>
</svg>
<div class="t" id="tb3a05af383" style="left:1593.00px;top:1158.5px;font-size:21px;height:21px;line-height:21px;letter-spacing:-2.667px;color:#9aa0a6">デバイス</div>
<div class="t" id="tfe3c036ee6" style="left:1947.60px;top:1158.5px;font-size:21px;height:21px;line-height:21px;letter-spacing:-3.000px;color:#9aa0a6">すべて</div>
<svg style="left:2457px;top:1158px" width="25" height="24" viewBox="0 0 25 24">
<path d="M2 18.5 L16.5 4 L20.5 8 L6 22.5 H2Z" fill="none" stroke="#e3e5e8" stroke-width="2.6" stroke-linejoin="round"/>
<path d="M17.5 2.5 L19.2 0.8 A1.5 1.5 0 0 1 21.3 0.8 L23.7 3.2 A1.5 1.5 0 0 1 23.7 5.3 L22 7Z" fill="#e3e5e8"/>
</svg>
<svg style="left:2502px;top:1156px" width="23" height="28" viewBox="0 0 23 28">
<rect x="1.3" y="4.3" width="20.4" height="22.4" rx="1.5" fill="none" stroke="#e3e5e8" stroke-width="2.4"/>
<rect x="5" y="2.5" width="13" height="5" fill="#e3e5e8"/><circle cx="11.5" cy="2.5" r="2.3" fill="#e3e5e8"/>
</svg>
<div class="t" id="tb785bba095" style="left:1594.00px;top:1225.8px;font-size:21px;height:21px;line-height:21px;letter-spacing:-0.900px;color:#5f6368">パソコンの入札単価調整</div>
<div class="a" style="left:1938px;top:1214.3px;width:599px;height:45.0px;background:#f1f3f4;border-radius:5px"></div>
<div class="t" id="td770ee496d" style="left:2514.70px;top:1225.0px;font-size:22.55px;height:22.55px;line-height:22.55px;color:#5f6368">%</div>
<div class="t" id="teccf231c6a" style="left:1593.00px;top:1289.8px;font-size:21px;height:21px;line-height:21px;letter-spacing:-0.889px;color:#5f6368">モバイルの単価調整比</div>
<div class="a" style="left:1938px;top:1278.3px;width:599px;height:45.0px;background:#f1f3f4;border-radius:5px"></div>
<div class="t" id="t13e91b6c51" style="left:2514.70px;top:1289.0px;font-size:22.55px;height:22.55px;line-height:22.55px;color:#5f6368">%</div>
<div class="t" id="t8c735da710" style="left:1592.00px;top:1353.9px;font-size:21px;height:21px;line-height:21px;letter-spacing:-0.909px;color:#5f6368">タブレットの入札単価調整</div>
<div class="a" style="left:1938px;top:1342.4px;width:599px;height:45.0px;background:#f1f3f4;border-radius:5px"></div>
<div class="t" id="tb48b4b404f" style="left:2514.70px;top:1353.1px;font-size:22.55px;height:22.55px;line-height:22.55px;color:#5f6368">%</div>
<div class="t" id="tdca2122fe9" style="left:1593.00px;top:1418.1px;font-size:21px;height:21px;line-height:21px;letter-spacing:-0.364px;color:#9aa0a6">テレビ画面の入札単価調整</div>
<div class="a" style="left:1938px;top:1406.4px;width:599px;height:45.0px;background:#f8f9fa;border-radius:5px"></div>
<div class="t" id="t152f3ca63e" style="left:2514.70px;top:1417.1px;font-size:22.55px;height:22.55px;line-height:22.55px;color:#5f6368">%</div>
<div class="t" id="tf5e4700d92" style="left:1594.00px;top:1480.7px;font-size:21px;height:21px;line-height:21px;letter-spacing:-1.778px;color:#5f6368">広告のローテーション</div>
<div class="a" style="left:1938px;top:1470.5px;width:599px;height:45.0px;background:#f1f3f4;border-radius:5px"></div>
<div class="t" id="t22c8033256" style="left:1947.60px;top:1483.2px;font-size:21px;height:21px;line-height:21px;color:#3c4043;width:548px;overflow:hidden;letter-spacing:-0.25px">最適化<span style="letter-spacing:0;font-size:1.08em">: </span>掲載結果が最も良好な広告が優先的に表示されます</div>
<svg style="left:2507.5px;top:1490.5px" width="13" height="7"><path d="M0 0H13L6.5 7Z" fill="#3c4043"/></svg>
<div class="a" style="left:0px;top:1544px;width:2560px;height:56px;background:#f2f2f2;border-top:2px solid #dadce0"></div>
<div class="t" id="tf3e8c91042" style="left:32.70px;top:1561.7px;font-size:21px;height:21px;line-height:21px;letter-spacing:-2.000px;color:#3c4043">選択されたキャンペーン<span style="letter-spacing:0;font-size:1.08em">: 1 / 2</span></div>
<div class="t" id="t3f929266be" style="left:1985.60px;top:1561.5px;font-size:21px;height:21px;line-height:21px;letter-spacing:-1.200px;color:#1a73e8">バージョン<span style="letter-spacing:0;font-size:1.08em"> </span><b><span style="letter-spacing:0;font-size:1.08em">1.6.3</span></b></div>
<svg style="left:2188px;top:1561px" width="21" height="24" viewBox="0 0 21 24">
<path d="M3 18 V10 A7.5 7.5 0 0 1 18 10 V18 L20 20 H1Z" fill="none" stroke="#d93025" stroke-width="2.4" stroke-linejoin="round"/>
<path d="M10.5 6.5 V13" stroke="#d93025" stroke-width="2.4"/><circle cx="10.5" cy="15.5" r="1.2" fill="#d93025"/>
<path d="M7.5 21.5 A3 3 0 0 0 13.5 21.5" fill="#d93025"/>
</svg>
<div class="t" id="t75688a0eec" style="left:2218.00px;top:1562.2px;font-size:21px;height:21px;line-height:21px;letter-spacing:-3.500px;color:#d93025"><b><span style="letter-spacing:0;font-size:1.08em">1.7.1</span></b><span style="letter-spacing:0;font-size:1.08em"> </span>に更新</div>
<div class="t" id="t78da0e15e1" style="left:2375.00px;top:1561.5px;font-size:23.1px;height:23.1px;line-height:23.1px;letter-spacing:-2.667px;color:#3c4043">100%</div>
<svg style="left:2439.5px;top:1570.5px" width="13" height="7"><path d="M0 0H13L6.5 7Z" fill="#3c4043"/></svg>
<svg style="left:2498px;top:1556px" width="31" height="31" viewBox="0 0 31 31">
<rect x="5.2" y="5.1" width="20.9" height="20.6" fill="#5f6368"/>
<path d="M15.8 0.6 L30 15.5 L15.8 30 L0.9 15.5Z" fill="#5f6368"/>
<circle cx="16.8" cy="15.5" r="8" fill="#f2f2f2"/>
<circle cx="13.2" cy="15.5" r="6.8" fill="#5f6368"/>
</svg>
</body></html>
